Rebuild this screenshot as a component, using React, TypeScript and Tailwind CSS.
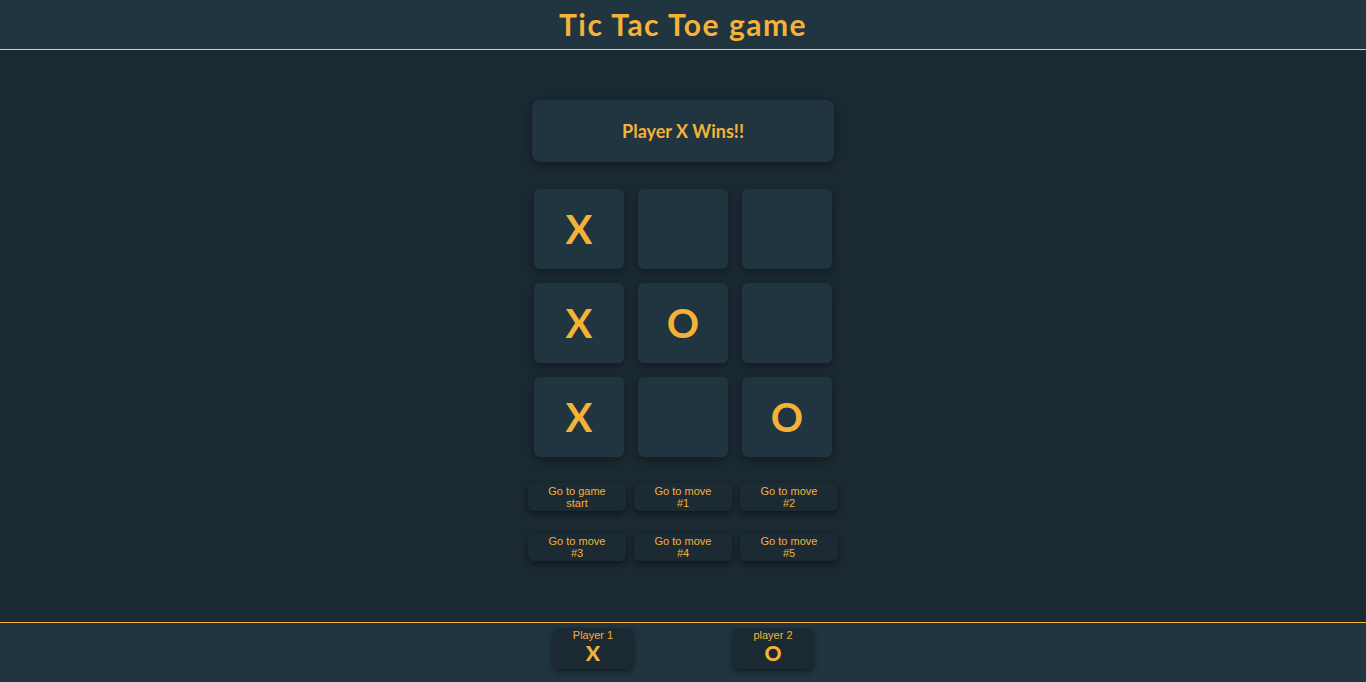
import React from 'react';

const board = ['X', '', '', 'X', 'O', '', 'X', '', 'O'];
const moves = ['Go to game start', 'Go to move #1', 'Go to move #2', 'Go to move #3', 'Go to move #4', 'Go to move #5'];

const App = () => {
  return (
    <div className="flex h-[682px] flex-col bg-[#1b2932] font-['Lato',sans-serif] text-[#f4b237]">
      {/* header */}
      <header className="flex h-[50px] items-center justify-center border-b border-[#c9d3cf] bg-[#203540]">
        <h1 className="text-[30px] font-bold tracking-[1.5px]">Tic Tac Toe game</h1>
      </header>

      <main className="flex flex-1 flex-col items-center pt-[50px]">
        <div className="flex h-[62px] w-[302px] items-center justify-center rounded-lg bg-[#203540] text-[18px] font-bold shadow-[0_3px_8px_rgba(0,0,0,0.35)]">
          Player X Wins!!
        </div>

        <div className="mt-[27px] grid grid-cols-[90px_90px_90px] gap-x-[14px] gap-y-[14px]">
          {board.map((v, i) => (
            <div
              key={i}
              className="flex h-[80px] items-center justify-center rounded-md bg-[#203540] text-[40px] font-bold shadow-[0_3px_8px_rgba(0,0,0,0.35)]"
            >
              {v}
            </div>
          ))}
        </div>

        <div className="mt-[26px] grid grid-cols-[98px_98px_98px] gap-x-[8px] gap-y-[22px] font-['Liberation_Sans',sans-serif]">
          {moves.map((m) => (
            <button
              key={m}
              className="h-[28px] rounded-md bg-[#1b2a33] px-[18px] text-[11px] leading-[12px] text-[#f4b237] shadow-[0_3px_6px_rgba(0,0,0,0.45)]"
            >
              {m}
            </button>
          ))}
        </div>
      </main>

      {/* footer */}
      <footer className="flex h-[60px] justify-center gap-[100px] border-t border-[#f4b237] bg-[#203540] pt-[5px]">
        {[
          ['Player 1', 'X'],
          ['player 2', 'O'],
        ].map(([name, mark]) => (
          <div
            key={name}
            className="flex h-[41px] w-[80px] flex-col items-center rounded-md bg-[#1b2932] pt-[1px] shadow-[0_3px_6px_rgba(0,0,0,0.45)]"
          >
            <span className="font-['Liberation_Sans',sans-serif] text-[11px] leading-[13px]">{name}</span>
            <span className="text-[21px] font-black leading-[22px]">{mark}</span>
          </div>
        ))}
      </footer>
    </div>
  );
};

export default App;
